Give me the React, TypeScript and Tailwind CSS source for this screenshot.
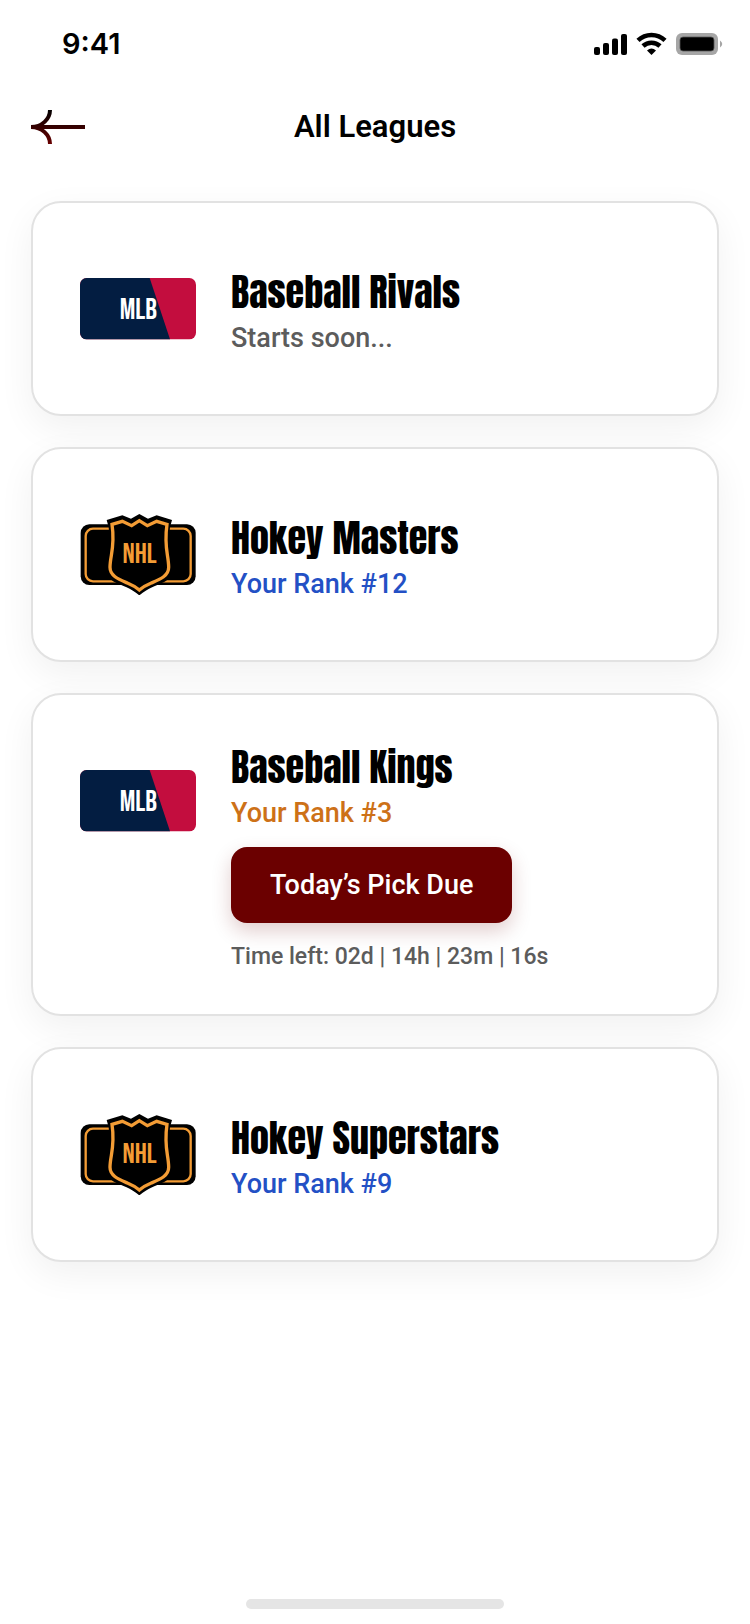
import { clsx } from "clsx";

type Sport = "mlb" | "nhl";

interface League {
  id: number;
  name: string;
  sport: Sport;
  status: string;
  tone: string;
  timeLeft?: string;
}

const leagues: League[] = [
  { id: 1, name: "Baseball Rivals", sport: "mlb", status: "Starts soon...", tone: "text-[#5c5c5c]" },
  { id: 2, name: "Hokey Masters", sport: "nhl", status: "Your Rank #12", tone: "text-[#2350c5]" },
  {
    id: 3,
    name: "Baseball Kings",
    sport: "mlb",
    status: "Your Rank #3",
    tone: "text-[#cd7118]",
    timeLeft: "Time left: 02d | 14h | 23m | 16s",
  },
  { id: 4, name: "Hokey Superstars", sport: "nhl", status: "Your Rank #9", tone: "text-[#2350c5]" },
];

const logoFont = "font-['Bebas_Neue','Oswald','Anton','Liberation_Sans_Narrow',sans-serif]";

function StatusBar() {
  return (
    <div className="flex h-22 items-center justify-between pr-[26px] pl-[62px]">
      <span className="font-['Inter',sans-serif] text-[29px] leading-8 font-semibold">9:41</span>
      <svg viewBox="0 0 130 24" className="h-6 w-[130px]" aria-hidden="true">
        <rect x="0" y="15" width="6" height="8" rx="2" />
        <rect x="9" y="11" width="6" height="12" rx="2" />
        <rect x="18" y="6.5" width="6" height="16.5" rx="2" />
        <rect x="27" y="2" width="6" height="21" rx="2" />
        <g fill="none" stroke="#000" strokeWidth="4.5">
          <path d="M44 8.4a19.5 19.5 0 0 1 27 0" />
          <path d="M49 14a12.4 12.4 0 0 1 17 0" />
        </g>
        <path d="M53 18.5q4.5-4 9 0l-4.5 4.5z" />
        <rect x="82" y="1" width="42" height="22" rx="6" fill="#a6a6a6" />
        <rect x="86" y="5" width="34" height="14" rx="3" stroke="#555" strokeWidth=".8" />
        <path d="M126 8.5q4.5 3.5 0 7z" fill="#a6a6a6" />
      </svg>
    </div>
  );
}

function BackArrow() {
  return (
    <svg viewBox="0 0 54 36" className="h-9 w-[54px]" fill="none" aria-hidden="true">
      <defs>
        <linearGradient id="arrow" gradientUnits="userSpaceOnUse" x1="0" y1="0" x2="0" y2="36">
          <stop stopColor="#000" />
          <stop offset="1" stopColor="#6b0000" />
        </linearGradient>
      </defs>
      <g stroke="url(#arrow)" strokeWidth="4">
        <path d="M0 18H54" />
        <path d="M19 1C19 10 11 18 0 18" />
        <path d="M19 35C19 26 11 18 0 18" />
      </g>
    </svg>
  );
}

function MlbLogo() {
  return (
    <svg viewBox="0 0 348 243" className="h-[81px] w-29 shrink-0" role="img" aria-label="MLB">
      <rect y="30" width="348" height="184" rx="20" fill="#c30d3e" />
      <path d="M20 30H209L270 214H20A20 20 0 0 1 0 194V50A20 20 0 0 1 20 30Z" fill="#031d41" />
      <text x="175" y="153" textAnchor="middle" fill="#fff" fontSize="87" className={logoFont}>
        MLB
      </text>
    </svg>
  );
}

function NhlLogo() {
  return (
    <svg viewBox="60 40 348 243" className="h-[81px] w-29 shrink-0" role="img" aria-label="NHL">
      <rect x="62" y="71" width="345" height="182" rx="26" />
      <rect x="77" y="84" width="315" height="158" rx="22" fill="none" stroke="#f39c35" strokeWidth="7" />
      <path d="M140 58L187 44L213 54L238 40L264 54L290 44L336 58L330 80C324 140 338 160 338 206C338 238 306 248 278 259C262 266 250 275 238 284C226 275 214 266 198 259C170 248 138 238 138 206C138 160 152 140 146 80Z" />
      <path
        d="M156 71L187 62L215 75L238 60L262 75L290 62L321 71C311 140 326 164 326 200C326 226 300 236 274 247C257 254 246 261 238 268C230 261 219 254 202 247C176 236 150 226 150 200C150 164 166 140 156 71Z"
        fill="none"
        stroke="#f39c35"
        strokeWidth="10"
      />
      <text x="239" y="187" textAnchor="middle" fill="#f39c35" fontSize="86" className={logoFont}>
        NHL
      </text>
    </svg>
  );
}

function LeagueCard({ league }: { league: League }) {
  const due = Boolean(league.timeLeft);

  return (
    <li className="flex items-start gap-[35px] rounded-[30px] border-2 border-[#e2e2e2] bg-white px-[47px] shadow-[0_12px_36px_rgba(0,0,0,0.06)]">
      <div className="shrink-0 py-[65px]">{league.sport === "mlb" ? <MlbLogo /> : <NhlLogo />}</div>
      <div className={clsx("min-w-0", due ? "pt-12 pb-[39px]" : "pt-[65px]")}>
        <h2 className="font-['Anton',sans-serif] text-[38px] leading-12 font-normal">{league.name}</h2>
        <p className={clsx("text-[27px] leading-11 font-medium", league.tone)}>{league.status}</p>
        {due && (
          <>
            <button
              type="button"
              className="mt-3 block rounded-2xl bg-[#6b0000] px-[39px] py-5 text-[27px] leading-9 font-medium text-white shadow-[0_8px_20px_rgba(107,0,0,0.2)]"
            >
              Today’s Pick Due
            </button>
            <p className="mt-4 text-[23px] leading-9 font-medium text-[#5c5c5c]">{league.timeLeft}</p>
          </>
        )}
      </div>
    </li>
  );
}

export default function App() {
  return (
    <div className="flex min-h-screen flex-col bg-white font-['Roboto',sans-serif] text-black">
      <StatusBar />
      <header className="grid grid-cols-[1fr_auto_1fr] items-center px-[31px] pt-[17px]">
        <button type="button" aria-label="Back" className="justify-self-start">
          <BackArrow />
        </button>
        <h1 className="text-[31px] leading-11 font-semibold">All Leagues</h1>
      </header>
      <ul className="mt-[52px] flex flex-col gap-[31px] px-[31px]">
        {leagues.map((league) => (
          <LeagueCard key={league.id} league={league} />
        ))}
      </ul>
      <div className="mx-auto mt-auto mb-[15px] h-[10px] w-[258px] rounded-full bg-[#e5e5e5]" />
    </div>
  );
}
